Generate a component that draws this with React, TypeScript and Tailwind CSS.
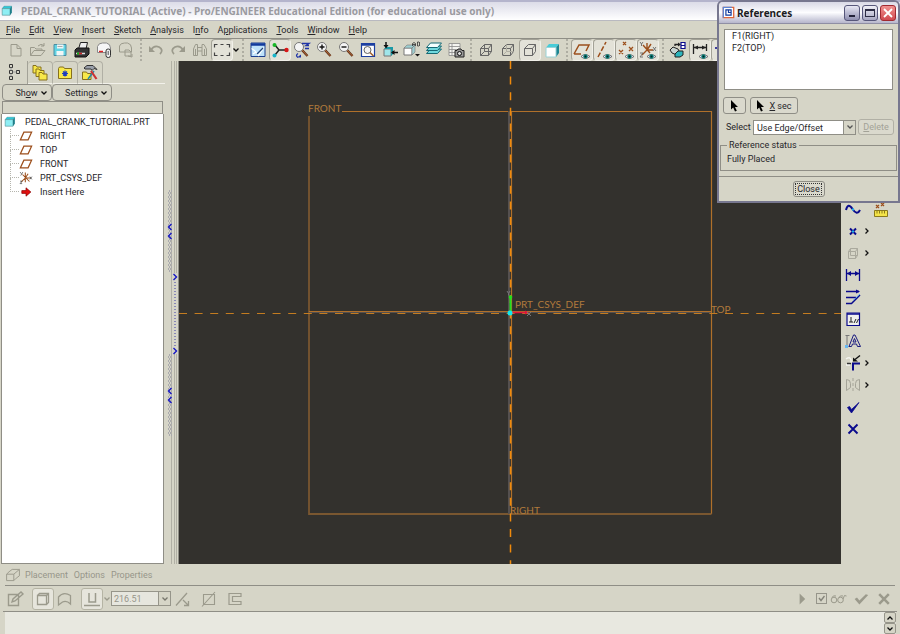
import React from 'react';

type Kids = { children: React.ReactNode };

const Icon = ({ children, size = 20 }: Kids & { size?: number }) => (
  <svg width={size} height={size} viewBox="0 0 20 20" fill="none" className="shrink-0" aria-hidden="true">
    {children}
  </svg>
);

const Eye = () => (
  <g>
    <path d="M9 16.5Q13 12.5 18 16.5Q13 20.5 9 16.5Z" fill="#eef" stroke="#555" strokeWidth=".8" />
    <circle cx="13.5" cy="16.5" r="2.2" fill="#0a8078" />
    <circle cx="13.5" cy="16.5" r="1" fill="#022" />
  </g>
);

const Lens = ({ x = 8, y = 7 }: { x?: number; y?: number }) => (
  <g>
    <path d={`M${x + 3} ${y + 3}l5.5 6`} stroke="#5b3018" strokeWidth="2.4" />
    <path d={`M${x + 3} ${y + 3}l5.5 6`} stroke="#b9693a" strokeWidth="1" />
    <circle cx={x} cy={y} r="4.5" fill="#f4f4f4" stroke="#777" />
  </g>
);

const Chevron = ({ dir = 'down', color = '#111' }: { dir?: 'down' | 'right' | 'up'; color?: string }) => (
  <svg width="6" height="6" viewBox="0 0 6 6" fill="none" className="shrink-0" aria-hidden="true">
    <path
      d={dir === 'down' ? 'M.5 1.5L3 4L5.5 1.5' : dir === 'up' ? 'M.5 4.5L3 2L5.5 4.5' : 'M1.5 .5L4 3L1.5 5.5'}
      stroke={color}
      strokeWidth="1.3"
    />
  </svg>
);

const FolderShape = ({ x, y }: { x: number; y: number }) => (
  <path d={`M${x} ${y}h3l1 1.5h4v6h-8z`} fill="#f8e84a" stroke="#86701c" />
);

const Plane = ({ size = 20 }: { size?: number }) => (
  <Icon size={size}>
    <path d="M2 15.5L7 4.5H18L13 15.5Z" stroke="#9c4f1c" strokeWidth="1.8" />
  </Icon>
);

const Cube = ({ size = 20 }: { size?: number }) => (
  <Icon size={size}>
    <path d="M2 6l3-4h13l-3 4z" fill="#2ec8d8" stroke="#167782" strokeWidth=".6" />
    <path d="M15 6l3-4v11l-3 4z" fill="#0d7884" />
    <path d="M2 6h13v11H2z" fill="#8eeef4" stroke="#4f8d94" strokeWidth="1" />
  </Icon>
);

const Csys = ({ size = 20 }: { size?: number }) => (
  <Icon size={size}>
    <path d="M9 2v8M9 10h8M9 10l-6 6M5 5l10 10M13 4l-4 6M9 10v6" stroke="#9c4f1c" strokeWidth="1.5" />
    <path d="M1.500 1.500l2 2.500M5.500 1.500l-3 5M15.500 8l3 4M18.500 8l-3 4M1.500 14.500h3l-3 3.500h3" stroke="#555" strokeWidth="1.1" />
  </Icon>
);

const grey = '#9b9a8c';
const navy = '#0a0a8c';

const NewFile = () => (
  <Icon>
    <path d="M5 4.500h6l4 4v7.500H5zM11 4.500v4h4" stroke={grey} />
  </Icon>
);
const OpenFile = () => (
  <Icon>
    <path d="M2.500 15.500v-8h4l1.500 1.500h6v2M2.500 15.500l3.500-5h11l-4 5zM10 6q3-3 6-.5M16 3v3h-3" stroke={grey} />
  </Icon>
);
const Save = () => (
  <Icon>
    <path d="M4 4.500h12v11H4z" fill="#62d4e4" stroke="#4b8ca0" />
    <path d="M7 4.500h6.500v4H7zM6.500 11h7v4.500h-7z" fill="#f2f6f6" />
    <path d="M7.500 6.500h5" stroke="#aaa" />
  </Icon>
);
const Print = () => (
  <Icon>
    <path d="M6.500 9l2-6.500h7L14 9z" fill="#eee" stroke="#222" />
    <path d="M3 10l2-2h12v6l-3 3H3z" fill="#333" stroke="#111" />
    <path d="M4 13.500h9" stroke="#ddd" strokeWidth="1.500" />
    <path d="M5 13.500h2" stroke="#1a1" strokeWidth="2" />
    <path d="M7 13.500h3" stroke="#c22" strokeWidth="1.500" />
  </Icon>
);
const Mail = () => (
  <Icon>
    <path d="M3.500 12.500V6.500q1-3.500 5-3.500h4q4 1 4 5v4.500z" fill="#f6f6f6" stroke="#888" />
    <path d="M5 11.500h4" stroke="#d22" strokeWidth="1.500" />
    <rect x="12" y="9" width="4.500" height="8.500" rx="2" fill="#eee" stroke="#333" />
    <path d="M14.200 11v4" stroke="#555" />
  </Icon>
);
const MailGrey = () => (
  <Icon>
    <path d="M3.500 12V6q1-3 5-3h3q4 1 4 5v4zM9 10h4l2 2v4H9zM12 16l4 1v-3" stroke={grey} />
  </Icon>
);
const Undo = ({ flip }: { flip?: boolean }) => (
  <Icon>
    <g transform={flip ? 'translate(20 0) scale(-1 1)' : undefined}>
      <path d="M5 10q3-5 8-3q5 3 1 7" stroke={grey} strokeWidth="1.800" />
      <path d="M3 6v6h6z" fill={grey} />
    </g>
  </Icon>
);
const Find = () => (
  <Icon>
    <path d="M3.500 15.500V9l2-4.500h2v11zM12 15.500v-11h2l2.500 4.500v6.500zM7.500 7.500H12M7.500 11H12M5.500 15.500V9M14.500 15.500V9" stroke={grey} />
  </Icon>
);
const Marquee = () => (
  <Icon>
    <path d="M2.500 7.500v-3h3M8.500 4.500h3M14.500 4.500h3v3M17.500 10v0M17.500 12.500v3h-3M11.500 15.500h-3M5.500 15.500h-3v-3" stroke="#444" strokeWidth="1.200" />
  </Icon>
);
const SketchView = () => (
  <Icon>
    <path d="M3 3h14v13.500H3z" fill="#bfe2fa" stroke="#1c3f8e" />
    <path d="M3 4.500h14" stroke="#123a9c" strokeWidth="2.500" />
    <path d="M3.500 8.500l3 2 4 5 5.500-8M5 14l3-2" stroke="#fff" strokeWidth="1.200" />
    <path d="M9 14l6-6" stroke="#247" strokeWidth="1.300" />
  </Icon>
);
const SpinCenter = () => (
  <Icon>
    <path d="M5 5l4 5h8M9 10l-4 5" stroke="#222" strokeWidth="1.500" />
    <circle cx="4.500" cy="5" r="2" fill="#18b828" />
    <circle cx="16.500" cy="10" r="2.200" fill="#d81818" />
    <circle cx="4.500" cy="15.500" r="2" fill="#18b4c8" />
  </Icon>
);
const Orient = () => (
  <Icon>
    <Lens x={7} y={7} />
    <path d="M10 3.500h7l-3 2h3M6 13.500q-3 2 0 4M13 8.500h4" stroke="#2035a8" strokeWidth="1.300" />
    <path d="M5 17.500h4v-3z" fill="#2035a8" />
  </Icon>
);
const ZoomIn = () => (
  <Icon>
    <Lens />
    <path d="M8 4.500v5M5.500 7h5" stroke="#111" strokeWidth="1.400" />
  </Icon>
);
const ZoomOut = () => (
  <Icon>
    <Lens />
    <path d="M5.500 7h5" stroke="#111" strokeWidth="1.400" />
  </Icon>
);
const Refit = () => (
  <Icon>
    <path d="M3.500 3.500h13v13h-13z" fill="#fff" stroke="#1c3fa0" strokeWidth="1.200" />
    <path d="M3 4.500h14" stroke="#1c3fa0" strokeWidth="2.500" />
    <circle cx="9.500" cy="10" r="3.500" fill="#f4f4f4" stroke="#666" />
    <path d="M12 12.500l3.500 3.500" stroke="#a0602f" strokeWidth="1.600" />
  </Icon>
);
const Reorient = () => (
  <Icon>
    <path d="M4 9h7v7H4z" fill="#9fe6ea" stroke="#777" />
    <path d="M4 9l2-2h7l-2 2zM11 9l2-2v7l-2 2z" fill="#1a9aa6" />
    <path d="M6 2v5M12 12.500h6" stroke="#111" strokeWidth="1.500" />
    <path d="M3.500 5h5L6 8.500zM14.500 10v5L11 12.500z" fill="#111" />
  </Icon>
);
const SavedViews = () => (
  <Icon>
    <path d="M2 8h8v7H2z" fill="#fff" stroke="#777" />
    <path d="M2 8l3-3h8l-3 3zM10 8l3-3v7l-3 3z" fill="#9ecfd2" stroke="#777" strokeWidth=".6" />
    <path d="M10.500 6V3.500l1.500-1 1.500 1V6M10.500 4.500h3M15.500 2v4h1.500l1-1-1-1 1-1-1-1z" stroke="#333" strokeWidth=".8" />
    <path d="M13 14h5l-2.500 2.500z" fill="#111" />
  </Icon>
);
const Layers = () => (
  <Icon>
    {[8, 5, 2].map((y) => (
      <path key={y} d={`M2.500 ${y + 5.500}l4-4.500h11l-4 4.500z`} fill={y === 2 ? '#f4ffff' : '#6fd8de'} stroke="#156874" />
    ))}
  </Icon>
);
const ViewManager = () => (
  <Icon>
    <path d="M3 3.500h11v12H3zM3 6.500h11M3 9.500h11M3 12.500h11M6 3.500v12" fill="#f4f4f0" stroke="#888" strokeWidth=".8" />
    <path d="M9 10.500h2l1-1.500h3l1 1.500h2V17H9z" fill="#999" stroke="#222" />
    <circle cx="13.500" cy="13.500" r="2" fill="#ddd" stroke="#111" />
  </Icon>
);
const Wire = ({ hidden = 'show' }: { hidden?: 'show' | 'grey' | 'none' }) => (
  <Icon>
    <path d="M4.500 8.500h8v7h-8zM4.500 8.500l4-4h7l-3 4M15.500 4.500v7l-3 4" stroke="#666" />
    {hidden !== 'none' && <path d="M8.500 4.500v7h7M8.500 11.500l-4 4" stroke={hidden === 'show' ? '#666' : '#b0afa4'} />}
  </Icon>
);
const Shaded = () => (
  <Icon>
    <path d="M4 7.500l3-3.500h10l-3 3.500z" fill="#48ccd8" />
    <path d="M14 7.500l3-3.500v9l-3 4z" fill="#1d8592" />
    <path d="M4 7.500h10V17H4z" fill="#fff" stroke="#9ad2d6" />
  </Icon>
);
const DatumPlanes = () => (
  <Icon>
    <path d="M2 14L7 5H17L14 11M2 14H9" stroke="#9c4f1c" strokeWidth="1.500" />
    <Eye />
  </Icon>
);
const DatumAxes = () => (
  <Icon>
    <path d="M4 17L12 2" stroke="#9c4f1c" strokeWidth="1.500" strokeDasharray="5 2" />
    <Eye />
  </Icon>
);
const DatumPoints = () => (
  <Icon>
    <path d="M7 2l3 3M10 2L7 5M3 10l4 4M7 10l-4 4M13 7l4 4M17 7l-4 4" stroke="#9c4f1c" strokeWidth="1.300" />
    <Eye />
  </Icon>
);
const DatumCsys = () => (
  <Icon>
    <path d="M9 3v7h6M9 10l-5 5M5 5l7 8M13 4l-4 6" stroke="#9c4f1c" strokeWidth="1.400" />
    <path d="M2 2l1.500 2L5 2M3.500 4v2M15 7l3 4M18 7l-3 4M2 13h3l-3 4h3" stroke="#666" strokeWidth=".9" />
    <Eye />
  </Icon>
);
const Orient3d = () => (
  <Icon>
    <path d="M2 10l3-3 5 2 2 4-3 2-5-2z" fill="#c8d4d2" stroke="#222" />
    <path d="M7 14l3-3h5v4l-3 2H7z" fill="#2bb4bc" stroke="#222" />
    <path d="M7 6V4.500h4" stroke="#222" strokeWidth="1.300" />
    <path d="M10 2.500v4l3-2z" fill="#222" />
    <path d="M13 2.500h4v6h-4zM13 5.500h4" fill="#fff" stroke={navy} strokeWidth="1.200" />
  </Icon>
);
const DimShow = () => (
  <Icon>
    <path d="M3.500 4v10M16.500 4v7M4 7.500h12" stroke="#222" strokeWidth="1.300" />
    <path d="M4 7.500l4-2v4zM16 7.500l-4-2v4z" fill="#222" />
    <Eye />
  </Icon>
);
const Constraint = () => (
  <Icon>
    <path d="M3 8h5V4" stroke={navy} strokeWidth="1.500" />
  </Icon>
);

const menus: [string, string, string][] = [
  ['', 'F', 'ile'],
  ['', 'E', 'dit'],
  ['', 'V', 'iew'],
  ['', 'I', 'nsert'],
  ['', 'S', 'ketch'],
  ['', 'A', 'nalysis'],
  ['I', 'n', 'fo'],
  ['A', 'p', 'plications'],
  ['', 'T', 'ools'],
  ['', 'W', 'indow'],
  ['', 'H', 'elp'],
];

interface Tool {
  label: string;
  icon: React.ReactNode;
  on?: boolean;
}

const toolGroups: Tool[][] = [
  [
    { label: 'New', icon: <NewFile /> },
    { label: 'Open', icon: <OpenFile /> },
    { label: 'Save', icon: <Save /> },
    { label: 'Print', icon: <Print /> },
    { label: 'Send mail', icon: <Mail /> },
    { label: 'Send link', icon: <MailGrey /> },
  ],
  [
    { label: 'Undo', icon: <Undo /> },
    { label: 'Redo', icon: <Undo flip /> },
    { label: 'Find', icon: <Find /> },
    { label: 'Select box', icon: <Marquee />, on: true },
  ],
  [
    { label: 'Sketch view', icon: <SketchView /> },
    { label: 'Spin center', icon: <SpinCenter />, on: true },
    { label: 'Orient mode', icon: <Orient /> },
    { label: 'Zoom in', icon: <ZoomIn /> },
    { label: 'Zoom out', icon: <ZoomOut /> },
    { label: 'Refit', icon: <Refit /> },
    { label: 'Reorient', icon: <Reorient /> },
    { label: 'Saved views', icon: <SavedViews /> },
    { label: 'Layers', icon: <Layers /> },
    { label: 'View manager', icon: <ViewManager /> },
  ],
  [
    { label: 'Wireframe', icon: <Wire /> },
    { label: 'Hidden line', icon: <Wire hidden="grey" /> },
    { label: 'No hidden', icon: <Wire hidden="none" />, on: true },
    { label: 'Shading', icon: <Shaded /> },
  ],
  [
    { label: 'Datum planes', icon: <DatumPlanes />, on: true },
    { label: 'Datum axes', icon: <DatumAxes />, on: true },
    { label: 'Datum points', icon: <DatumPoints />, on: true },
    { label: 'Coordinate systems', icon: <DatumCsys />, on: true },
  ],
  [
    { label: 'Sketch orientation', icon: <Orient3d /> },
    { label: 'Show dimensions', icon: <DimShow />, on: true },
    { label: 'Show constraints', icon: <Constraint />, on: true },
  ],
];

const Toolbar = () => (
  <div className="flex h-[23px] shrink-0 items-stretch overflow-hidden border-t border-[#8f8e86] pl-[5px]">
    {toolGroups.map((group, i) => (
      <React.Fragment key={i}>
        {i > 0 && (
          <div className="flex w-2 shrink-0 justify-center">
            <div className="border-l-2 border-dotted border-[#aeada2]" />
          </div>
        )}
        {group.map((t) => (
          <button
            key={t.label}
            aria-label={t.label}
            className={`flex w-[22px] shrink-0 items-center justify-center ${
              t.on ? 'rounded-sm border border-[#a3a297] border-r-[#f2f1ea] border-b-[#f2f1ea] bg-[#e3e2d8]' : ''
            }`}
          >
            {t.icon}
          </button>
        ))}
        {i === 1 && (
          <button aria-label="Select options" className="flex w-[6px] shrink-0 items-center">
            <Chevron />
          </button>
        )}
      </React.Fragment>
    ))}
  </div>
);

const tabs: Tool[] = [
  {
    label: 'Model tree',
    on: true,
    icon: (
      <Icon>
        <path d="M5.500 1.500h3v3h-3zM5.500 7.500h3v3h-3zM5.500 13.500h3v3h-3zM12.500 7.500h3v3h-3z" stroke="#333" />
        <path d="M8.500 9h4M7 4.500v3M7 10.500v3" stroke="#999" />
      </Icon>
    ),
  },
  {
    label: 'Folder browser',
    icon: (
      <Icon>
        <FolderShape x={3} y={2.500} />
        <FolderShape x={6} y={6} />
        <FolderShape x={9} y={9.500} />
      </Icon>
    ),
  },
  {
    label: 'Favorites',
    icon: (
      <Icon>
        <path d="M3.500 5.500l1-1.500h4l1 1.500h7v10h-13z" fill="#f8e84a" stroke="#86701c" />
        <path d="M10 7.500v6M7 10.500h6M8 8.500l4 4M12 8.500l-4 4" stroke="#1d3cc0" strokeWidth="1.200" />
      </Icon>
    ),
  },
  {
    label: 'Connections',
    icon: (
      <Icon>
        <path d="M2.500 9h4l1 1.500h3.500v6H2.500z" fill="#f8e84a" stroke="#86701c" />
        <path d="M4 5l3-2.500h6l4 4-3-1-2 2-1-1.500H5z" fill="#9aa0aa" stroke="#333" />
        <path d="M14 8l-6 8" stroke="#28a" strokeWidth="1.500" />
        <path d="M11 8l5.500 8" stroke="#c33" strokeWidth="2.200" />
      </Icon>
    ),
  },
];

const treeItems: { name: string; icon: React.ReactNode }[] = [
  { name: 'RIGHT', icon: <Plane size={14} /> },
  { name: 'TOP', icon: <Plane size={14} /> },
  { name: 'FRONT', icon: <Plane size={14} /> },
  { name: 'PRT_CSYS_DEF', icon: <Csys size={14} /> },
  {
    name: 'Insert Here',
    icon: (
      <Icon size={14}>
        <path d="M4 8h6V4l7 6-7 6v-4H4z" fill="#e01010" stroke="#800" />
      </Icon>
    ),
  },
];

const Navigator = () => (
  <aside className="flex w-[165px] shrink-0 flex-col">
    <div className="flex h-[23px] shrink-0">
      {tabs.map((t) => (
        <button
          key={t.label}
          aria-label={t.label}
          className={`flex items-center justify-center ${
            t.on
              ? 'w-7 border-r border-[#a3a297]'
              : 'w-[25px] rounded-t border-t border-r border-b border-[#b1b0a5] border-b-[#f2f1ea]'
          }`}
        >
          {t.icon}
        </button>
      ))}
      <div className="flex-1 border-b border-[#f2f1ea]" />
    </div>
    <div className="flex h-[17px] shrink-0 pl-0.5">
      <button className="flex w-[50px] items-center justify-center gap-[3px] rounded-sm border border-[#8f8e86] pl-2">
        <span>Sh<u>o</u>w</span>
        <Chevron />
      </button>
      <button className="flex w-[60px] items-center justify-center gap-[3px] rounded-sm border border-[#8f8e86] pl-2">
        <span>Settin<u>g</u>s</span>
        <Chevron />
      </button>
    </div>
    <div className="mr-0.5 ml-0.5 h-[13px] shrink-0 border border-[#8f8e86]" />
    <div className="mr-px ml-px flex-1 border border-t-0 border-[#8f8e86] bg-white pt-px">
      <div className="flex h-[14px] items-center gap-[9px] pl-0.5">
        <Cube size={12} />
        <span>PEDAL_CRANK_TUTORIAL.PRT</span>
      </div>
      <ul className="ml-2">
        {treeItems.map((item, i) => (
          <li key={item.name} className="flex h-[14px] items-center">
            <span
              className={`w-[9px] self-start border-b border-l border-dotted border-[#b5b5ad] ${
                i === 0 ? 'h-[7px]' : '-mt-[7px] h-[14px]'
              }`}
            />
            {item.icon}
            <span className="pl-[7px]">{item.name}</span>
          </li>
        ))}
      </ul>
    </div>
  </aside>
);

const Grip = ({ y }: { y: number }) => (
  <g>
    <rect x="3" y={y} width="4" height="82" fill="url(#grip)" />
    <path d={`M6.500 ${y + 34}l-3 3 3 3M6.500 ${y + 43}l-3 3 3 3`} stroke="#1616c4" strokeWidth="1.400" />
  </g>
);

const Sash = () => (
  <div className="flex w-[14px] shrink-0 items-center border-r border-[#8f8e86]">
    <div className="h-full w-[7px] shrink-0 border-r border-[#b1b0a5]">
      <div className="flex h-full items-center">
        <svg width="13" height="246" viewBox="0 0 13 246" fill="none" className="relative shrink-0" aria-hidden="true">
          <defs>
            <pattern id="grip" width="2" height="4" patternUnits="userSpaceOnUse">
              <path d="M0 0h1v2H0zM1 2h1v2H1z" fill="#a9a9ad" />
            </pattern>
          </defs>
          <Grip y={0} />
          <path d="M7 83h6v81H7z" fill="#d6d5c7" />
          <path d="M8.500 84l3 3-3 3M8.500 158l3 3-3 3" stroke="#1616c4" strokeWidth="1.400" />
          <path d="M10 92v64" stroke="#3a3aa8" strokeDasharray="1 2" />
          <Grip y={164} />
        </svg>
      </div>
    </div>
    <div className="ml-0.5 h-full w-[3px] border-x border-[#b1b0a5]" />
  </div>
);

const Viewport = () => (
  <main className="min-w-0 flex-1 bg-[#33312d]">
    <svg viewBox="0 0 662 503" fill="none" className="block h-full w-full font-['Lato',sans-serif] text-[10px]">
      <path d="M163 50.500H532.500V453" stroke="#b0702a" strokeWidth="1.200" />
      <path d="M130 55V453H532.500" stroke="#7a5730" strokeWidth="1.800" />
      <path d="M330 50V453M130 251H532" stroke="#55504f" strokeWidth="2" />
      <path d="M332.500 50V453M130 250.500H532" stroke="#b0702a" strokeWidth="1.200" />
      <path d="M331.500 0V503" stroke="#f08a0c" strokeWidth="1.500" strokeDasharray="8 7.600" />
      <path d="M0 252.500H662" stroke="#c47c20" strokeWidth="1.200" strokeDasharray="8 7.600" />
      <path d="M331.500 251V236" stroke="#20e020" strokeWidth="2" />
      <circle cx="331.500" cy="236" r="1.800" fill="#20e020" />
      <path d="M332 251.500H347" stroke="#e0143c" strokeWidth="1.500" />
      <path d="M346 249.500l4 2-4 2z" fill="#e0143c" />
      <circle cx="331" cy="252" r="2.500" fill="#10e8f0" />
      <path d="M328 230l1.500 2.500L331 230M329.500 232.500v2M348 251l4 4M352 251l-4 4" stroke="#77757a" />
      <g fill="#b07a3c">
        <text x="129" y="51">FRONT</text>
        <text x="336" y="247">PRT_CSYS_DEF</text>
        <text x="532" y="252">TOP</text>
        <text x="331" y="453">RIGHT</text>
      </g>
    </svg>
  </main>
);

const sketchTools: (Tool & { more?: boolean })[] = [
  {
    label: 'Spline',
    icon: (
      <Icon>
        <path d="M3 11Q5 3 9.500 10T17 11" stroke={navy} strokeWidth="2" />
        <path d="M9 9.500h2v2H9z" fill="#18b4f0" />
      </Icon>
    ),
  },
  {
    label: 'Point',
    more: true,
    icon: (
      <Icon>
        <path d="M7 7.500l6 6M13 7.500l-6 6" stroke={navy} strokeWidth="2" />
        <path d="M9 9.500h2v2H9z" fill="#18b4f0" />
      </Icon>
    ),
  },
  {
    label: 'Use edge',
    more: true,
    icon: (
      <Icon>
        <path d="M5.500 8.500h7v7h-7zM5.500 8.500l2-3h7v7l-2 3M12.500 8.500l2-3M7.500 5.500v7h7" stroke="#aaa99d" />
      </Icon>
    ),
  },
  {
    label: 'Dimension',
    icon: (
      <Icon>
        <path d="M3.500 4v12M16.500 4v12M4 8.500h12" stroke={navy} strokeWidth="1.300" />
        <path d="M4 8.500l4-2.500v5zM16 8.500l-4-2.500v5z" fill={navy} />
      </Icon>
    ),
  },
  {
    label: 'Modify',
    icon: (
      <Icon>
        <path d="M3 4.500h13M3 10.500h10M3 16.500h5.500L17 8" stroke={navy} strokeWidth="1.500" />
        <path d="M13 2.500v4l4-2z" fill={navy} />
        <path d="M10 13.500L17 7" stroke="#4aa8f0" strokeWidth=".8" />
      </Icon>
    ),
  },
  {
    label: 'Constrain',
    icon: (
      <Icon>
        <path d="M4 4h12.500v12.500H4z" fill="#f0f0ee" stroke={navy} strokeWidth="1.200" />
        <path d="M4 5h12.500" stroke={navy} strokeWidth="1.500" />
        <path d="M8 8v5M6 13h4M11 14l2-4M13.500 14l2-4" stroke="#222" />
      </Icon>
    ),
  },
  {
    label: 'Text',
    icon: (
      <Icon>
        <path d="M4 4v11M2.500 4.500h4M2.500 15.500h3" stroke="#777" />
        <path d="M6 15.500L10.500 4h1.500l5.500 11.500h-3L13.500 13H9.500l-1 2.500zM10 11h3L11.500 7.500z" stroke="#1a1a80" />
        <path d="M2 14h3v3H2z" fill="#68b8f0" />
      </Icon>
    ),
  },
  {
    label: 'Trim',
    more: true,
    icon: (
      <Icon>
        <path d="M3 6q4-3 5 1t-5 5M3 12h4" stroke="#f4f4f0" strokeWidth="1.500" />
        <path d="M10 17.500V10.500H17" stroke={navy} strokeWidth="2" />
        <path d="M4 10.500h4" stroke="#333" strokeWidth="1.500" />
        <path d="M17 2.500l-5 4" stroke="#111" strokeWidth="1.500" />
        <path d="M10 4.500v4h5z" fill="#111" />
      </Icon>
    ),
  },
  {
    label: 'Mirror',
    more: true,
    icon: (
      <Icon>
        <path d="M3.500 4.500q4 0 4 4v4l-4 3zM16.500 4.500q-4 0-4 4v4l4 3z" stroke="#a5a498" />
        <path d="M10 3v14" stroke="#a5a498" strokeDasharray="3 2" />
      </Icon>
    ),
  },
  {
    label: 'Done',
    icon: (
      <Icon>
        <path d="M4.500 10.500l2-1 2 3 7.500-7-7.500 10.500z" fill={navy} stroke={navy} strokeWidth=".8" />
      </Icon>
    ),
  },
  {
    label: 'Quit',
    icon: (
      <Icon>
        <path d="M5.500 5.500l9 9M14.500 5.500l-9 9" stroke={navy} strokeWidth="1.900" />
      </Icon>
    ),
  },
];

const SketchBar = () => (
  <aside className="flex w-[59px] shrink-0 gap-px pt-[137px] pl-px">
    <div className="flex w-7 flex-col">
      {sketchTools.map((t) => (
        <div key={t.label} className="flex h-[22px] items-center">
          <button aria-label={t.label} className="flex w-[22px] shrink-0 justify-center">
            {t.icon}
          </button>
          {t.more && (
            <button aria-label={`${t.label} options`}>
              <Chevron dir="right" />
            </button>
          )}
        </div>
      ))}
    </div>
    <button aria-label="Measure" className="flex h-[22px] items-center">
      <Icon>
        <path d="M5 6l3 3M8 6L5 9M10 4l3 3M13 4l-3 3" stroke="#9c4f1c" strokeWidth="1.300" />
        <path d="M3.500 11.500h13v6h-13z" fill="#f4e448" stroke="#8a7a1c" />
        <path d="M6 11.500v3M8.500 11.500v3M11 11.500v3M13.500 11.500v3" stroke="#8a7a1c" />
      </Icon>
    </button>
  </aside>
);

const Pointer = () => (
  <svg width="9" height="12" viewBox="0 0 9 12" aria-hidden="true">
    <path d="M1 0v9.500l2.200-2L5 11.500l1.800-.8L5 7h3z" fill="#000" />
  </svg>
);

const frameBtn = 'flex shrink-0 items-center justify-center rounded-[3px] border bg-[#dad9cd]';

const ReferencesDialog = () => (
  <section
    aria-label="References"
    className="absolute top-0 right-0 flex w-[183px] flex-col rounded-t-md border-2 border-[#77778f] bg-[#d6d5c7]"
  >
    <header className="flex h-[22px] items-center gap-0.5 rounded-t-sm border-b border-[#8f8fa4] bg-linear-to-b from-[#d9d9e6] via-[#fdfdff] to-[#b6b6cc] pr-0.5 pl-[3px]">
      <Icon size={13}>
        <path d="M2 2h16v16H2z" fill="#fff" stroke="#e0653a" strokeWidth="2" />
        <path d="M2 18V2h13" stroke="#5a86d8" strokeWidth="2" />
        <path d="M6 6h8v8H6zM10 6v4h4" stroke="#123a9c" strokeWidth="1.800" />
      </Icon>
      <h2 className="flex-1 font-['Noto_Sans',sans-serif] text-[10px] font-bold text-[#1c1c22]">References</h2>
      <button aria-label="Minimize" className="flex h-4 w-4 items-end justify-center rounded-[3px] border border-[#56567a] bg-linear-to-b from-[#e8e8f4] to-[#8f8fb0] pb-[3px]">
        <span className="h-0.5 w-1.5 bg-[#22223a]" />
      </button>
      <button aria-label="Maximize" className="flex h-4 w-4 items-center justify-center rounded-[3px] border border-[#56567a] bg-linear-to-b from-[#f0f0f8] to-[#a8a8c2]">
        <span className="h-2 w-2.5 border border-t-2 border-[#2c2c44]" />
      </button>
      <button aria-label="Close window" className="flex h-4 w-4 items-center justify-center rounded-[3px] border border-[#a02830] bg-linear-to-b from-[#f09090] to-[#d04850]">
        <svg width="10" height="10" viewBox="0 0 10 10" aria-hidden="true">
          <path d="M1 1l8 8M9 1l-8 8" stroke="#fff" strokeWidth="1.800" />
        </svg>
      </button>
    </header>
    <ul className="mx-[5px] mt-[5px] h-[61px] border border-[#8f8e86] bg-white pl-[7px] leading-3">
      <li>F1(RIGHT)</li>
      <li>F2(TOP)</li>
    </ul>
    <div className="mt-[7px] flex gap-1 pl-1">
      <button aria-label="Pick reference" className={`${frameBtn} h-[17px] w-[23px] border-[#8f8e86]`}>
        <Pointer />
      </button>
      <button className={`${frameBtn} h-[17px] w-12 gap-1 border-[#8f8e86]`}>
        <Pointer />
        <span><u>X</u> sec</span>
      </button>
    </div>
    <div className="mt-[5px] flex h-4 items-center pr-1 pl-[7px]">
      <label htmlFor="ref-select" className="w-[27px] shrink-0">Select</label>
      <div className="relative h-[15px] flex-1">
        <select id="ref-select" className="block h-full w-full appearance-none border border-[#8f8e86] bg-white pl-[3px]">
          <option>Use Edge/Offset</option>
        </select>
        <span className="pointer-events-none absolute top-px right-px bottom-px flex w-3 items-center justify-center border-l border-[#8f8e86] bg-[#d6d5c7]">
          <Chevron color="#555" />
        </span>
      </div>
      <button disabled className={`${frameBtn} ml-0.5 h-4 w-9 border-[#b1b0a5] text-[#a3a297]`}>
        <span><u>D</u>elete</span>
      </button>
    </div>
    <fieldset className="mx-px mt-1 h-[32px] border border-[#8f8e86] pl-1.5">
      <legend className="px-0.5 leading-3">Reference status</legend>
      <p className="pt-0.5 leading-3">Fully Placed</p>
    </fieldset>
    <footer className="mt-[5px] flex h-[25px] items-center justify-center border-t border-[#8f8e86]">
      <button className={`${frameBtn} h-4 w-8 border-[#8f8e86]`}>
        <span className="border border-dotted border-[#333] px-px leading-[10px]">Close</span>
      </button>
    </footer>
  </section>
);

const Dashboard = () => (
  <footer className="shrink-0 text-[#96958a]">
    <div className="mx-[5px] flex h-[22px] items-center border-b border-[#8f8e86]">
      <Icon size={16}>
        <path d="M2 9h9v8H2zM2 9l3-3M11 17l3-3M11 9l7-6v8l-4 3M9 3h9M5 6l4-3" stroke={grey} strokeWidth="1.200" />
      </Icon>
      <button className="ml-1">Placement</button>
      <button className="ml-1.5">Options</button>
      <button className="ml-1.5">Properties</button>
    </div>
    <div className="mr-[3px] ml-[3px] flex h-[26px] items-center border-b border-[#8f8e86] pr-[5px] pl-0.5">
      <button aria-label="Edit sketch" className="mr-[5px] flex w-[22px] justify-center">
        <Icon>
          <path d="M2.500 5.500h10v11h-10zM6 13l1-3 8-7 2 2-8 7z" stroke={grey} strokeWidth="1.400" />
        </Icon>
      </button>
      <button aria-label="Solid" className="flex h-[22px] w-[22px] items-center justify-center rounded-[3px] border border-[#b5b4a4] bg-[#e6e5dc]">
        <Icon>
          <path d="M4.500 6.500h9v9h-9zM4.500 6.500l2-2h9v9l-2 2M13.500 6.500l2-2" stroke={grey} strokeWidth="1.300" />
        </Icon>
      </button>
      <button aria-label="Surface" className="flex w-[22px] justify-center">
        <Icon>
          <path d="M3.500 16V8q5-6 12-1.500V15q-4-4-8-2z" stroke={grey} strokeWidth="1.300" />
        </Icon>
      </button>
      <button aria-label="Depth" className="ml-[5px] flex h-[22px] w-[22px] items-center justify-center rounded-[3px] border border-[#b5b4a4] bg-[#e6e5dc]">
        <Icon>
          <path d="M2 16.500h16M7 4v9h6.500V4" stroke={grey} strokeWidth="1.500" />
        </Icon>
      </button>
      <button aria-label="Depth options" className="flex w-2 justify-center">
        <Chevron color={grey} />
      </button>
      <div className="flex h-[15px] border border-[#96958a]">
        <input aria-label="Depth value" defaultValue="216.51" className="w-[46px] bg-[#e6e6de] pl-0.5" />
        <button aria-label="Depth history" className="flex w-3 items-center justify-center border-l border-[#96958a]">
          <Chevron color="#77766c" />
        </button>
      </div>
      <button aria-label="Flip direction" className="flex w-[22px] justify-center">
        <Icon>
          <path d="M4 16.500L15 4M11 11l5 5M16.500 12v4.500H12" stroke={grey} strokeWidth="1.300" />
        </Icon>
      </button>
      <button aria-label="Remove material" className="ml-[5px] flex w-[22px] justify-center">
        <Icon>
          <path d="M4.500 5.500h11v10h-11zM3 17.500L16 3" stroke={grey} strokeWidth="1.100" />
        </Icon>
      </button>
      <button aria-label="Thicken" className="ml-1 flex w-[22px] justify-center">
        <Icon>
          <path d="M16 4.500H4v11h12v-3H7.500v-5H16z" stroke={grey} strokeWidth="1.200" />
        </Icon>
      </button>
      <div className="flex-1" />
      <button aria-label="Resume" className="mr-1.5 flex w-4 justify-center">
        <Icon size={16}>
          <path d="M7 3l7 7-7 7z" fill={grey} />
        </Icon>
      </button>
      <label className="relative flex items-center gap-[3px]">
        <input type="checkbox" aria-label="Preview" defaultChecked className="h-[11px] w-[11px] appearance-none border border-[#96958a]" />
        <svg width="7" height="7" viewBox="0 0 7 7" fill="none" className="pointer-events-none absolute left-0.5" aria-hidden="true">
          <path d="M1 3l2 2.500L6.500 1" stroke="#85847a" strokeWidth="1.400" />
        </svg>
        <svg width="17" height="10" viewBox="0 0 17 10" fill="none" aria-hidden="true">
          <circle cx="4" cy="6" r="2.800" stroke={grey} />
          <circle cx="10.500" cy="6" r="2.800" stroke={grey} />
          <path d="M2 3.500Q3 1 6 2M9 3.500Q10 1 13 2M13 5l1.500-3.500 2 .5" stroke={grey} />
        </svg>
      </label>
      <button aria-label="Accept" className="ml-1.5">
        <Icon size={16}>
          <path d="M2 10l3-2 3 4L16 4l3 1L8 17z" fill={grey} />
        </Icon>
      </button>
      <button aria-label="Cancel" className="ml-[7px]">
        <Icon size={16}>
          <path d="M4 4l12 12M16 4L4 16" stroke={grey} strokeWidth="3.200" />
        </Icon>
      </button>
    </div>
    <div className="mr-1 ml-[5px] flex h-[22px] bg-[#e8e8e0]">
      <div className="flex-1" />
      <div className="flex w-3 flex-col">
        <button aria-label="Scroll up" className="flex flex-1 items-center justify-center rounded-[2px] border border-[#96958a] bg-[#d6d5c7]">
          <Chevron dir="up" />
        </button>
        <button aria-label="Scroll down" className="flex flex-1 items-center justify-center rounded-[2px] border border-[#96958a] bg-[#d6d5c7]">
          <Chevron />
        </button>
      </div>
    </div>
  </footer>
);

export default function App() {
  return (
    <div className="relative flex h-screen flex-col overflow-hidden bg-[#d6d5c7] font-['Roboto',sans-serif] text-[9px] leading-[14px] text-[#26262a]">
      <header className="flex h-[21px] shrink-0 items-center gap-2 border-t-2 border-b border-t-[#b4b4cc] border-b-[#b9b9c0] bg-linear-to-b from-[#dcdce8] to-white pl-px">
        <Cube size={12} />
        <h1 className="font-['Noto_Sans',sans-serif] text-[10px] font-bold whitespace-nowrap text-[#9a9aa0]">
          PEDAL_CRANK_TUTORIAL (Active) - Pro/ENGINEER Educational Edition (for educational use only)
        </h1>
      </header>
      <nav className="flex h-[17px] shrink-0 items-center gap-[9px] pl-1.5">
        {menus.map(([pre, key, post]) => (
          <button key={key + post}>
            {pre}
            <u>{key}</u>
            {post}
          </button>
        ))}
      </nav>
      <Toolbar />
      <div className="flex min-h-0 flex-1">
        <Navigator />
        <Sash />
        <Viewport />
        <SketchBar />
      </div>
      <Dashboard />
      <ReferencesDialog />
    </div>
  );
}
